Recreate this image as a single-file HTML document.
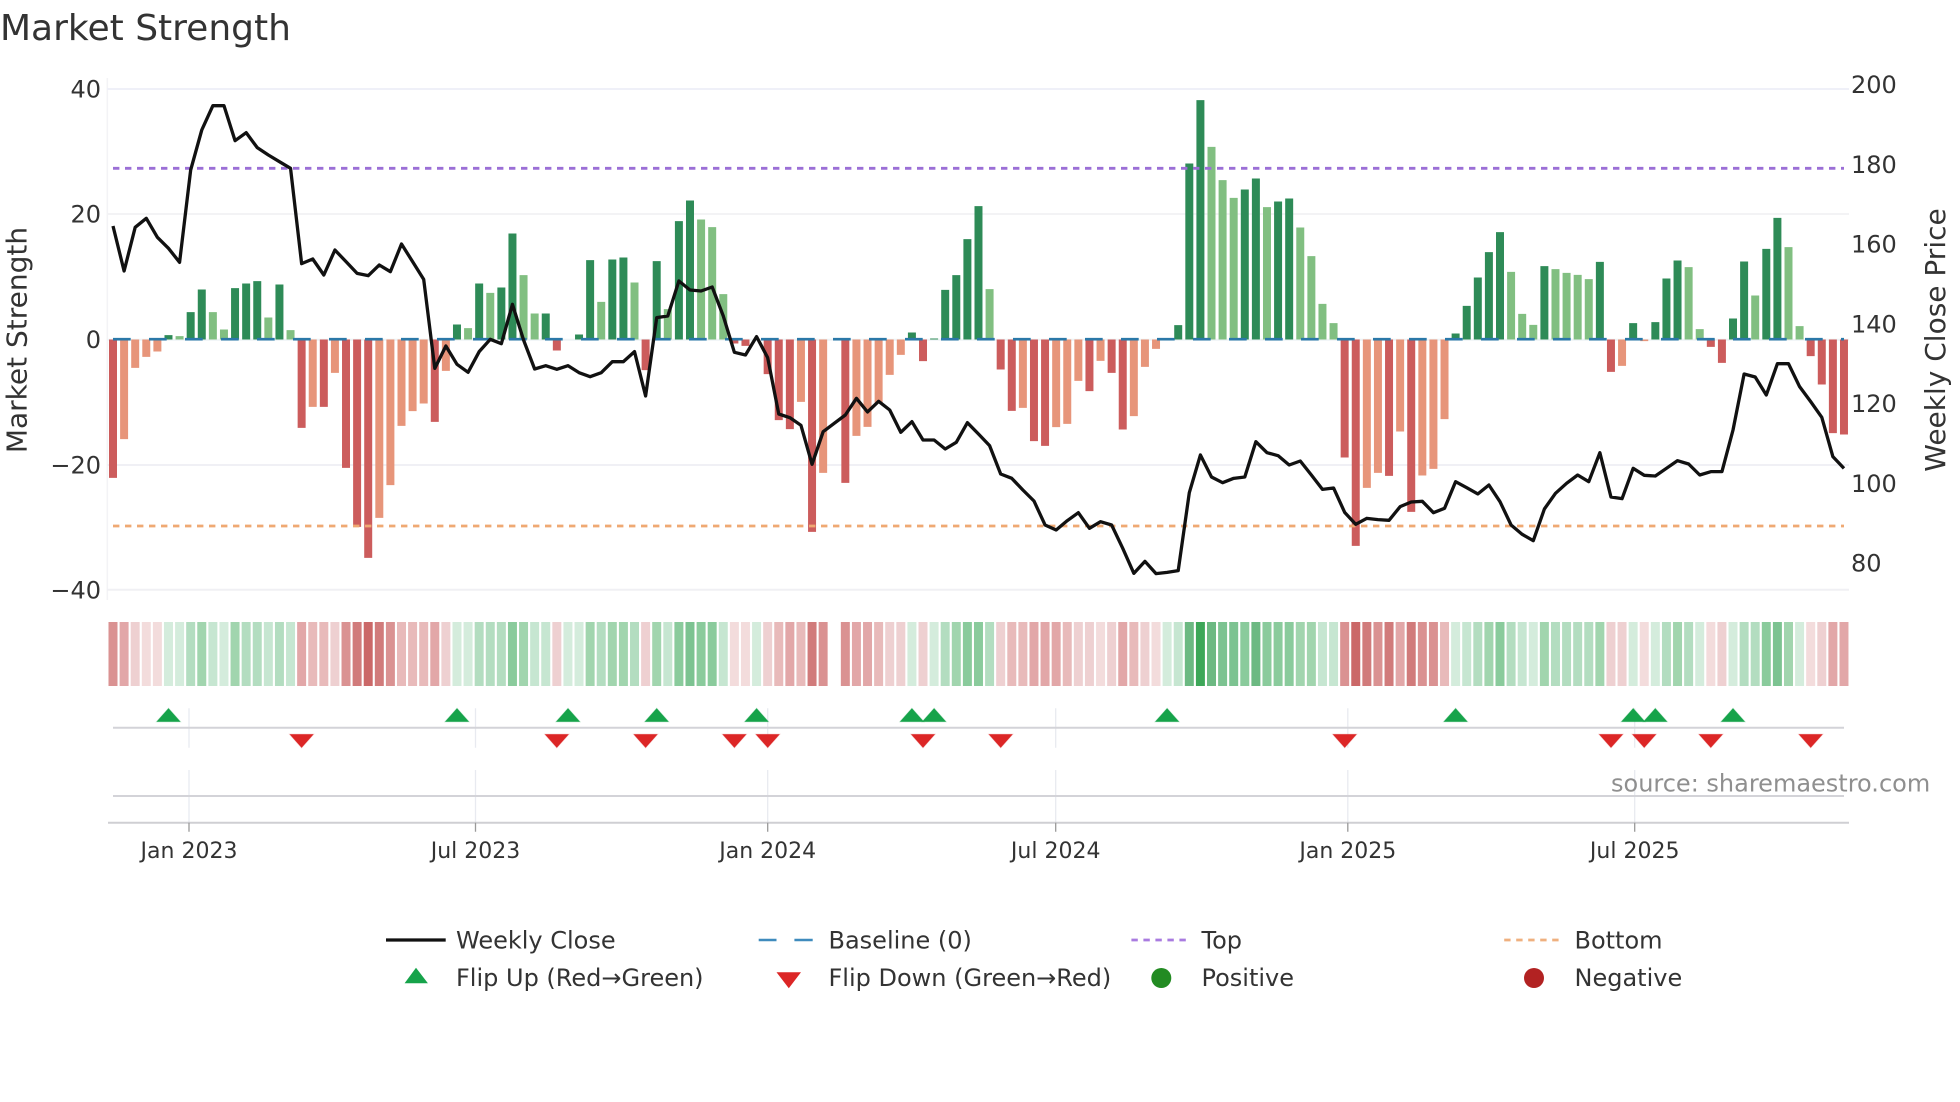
<!DOCTYPE html>
<html lang="en">
<head>
<meta charset="utf-8">
<title>Market Strength</title>
<style>
html,body{margin:0;padding:0;background:#fff;}
svg{display:block;}
text{font-family:"DejaVu Sans","Liberation Sans",sans-serif;fill:#333;}
</style>
</head>
<body>
<svg xmlns="http://www.w3.org/2000/svg" width="1960" height="1102" viewBox="0 0 1960 1102">
<rect width="1960" height="1102" fill="#fff"/>

<text x="0" y="40" font-size="36">Market Strength</text>

<!-- grid -->
<path d="M107.3 78V600" stroke="#f3f3f6" stroke-width="1.5" fill="none"/>
<path d="M107 89H1849" stroke="#eff0f8" stroke-width="2" fill="none"/>
<path d="M107 214H1849" stroke="#f3f3f5" stroke-width="2" fill="none"/>
<path d="M107 339.7H1849" stroke="#eef3f6" stroke-width="2" fill="none"/>
<path d="M107 465H1849" stroke="#f0f0f5" stroke-width="2" fill="none"/>
<path d="M107 589.7H1849" stroke="#f0f0f4" stroke-width="2" fill="none"/>

<!-- y labels -->
<g font-size="24" text-anchor="end">
<text x="101" y="97.6">40</text>
<text x="101" y="222.6">20</text>
<text x="101" y="348.1">0</text>
<text x="101" y="473.6">−20</text>
<text x="101" y="598.3">−40</text>
</g>
<g font-size="24">
<text x="1851" y="93.2">200</text>
<text x="1851" y="172.9">180</text>
<text x="1851" y="252.6">160</text>
<text x="1851" y="332.4">140</text>
<text x="1851" y="412.1">120</text>
<text x="1851" y="491.8">100</text>
<text x="1851" y="571.5">80</text>
</g>
<text transform="translate(26.5 340) rotate(-90)" font-size="28" text-anchor="middle">Market Strength</text>
<text transform="translate(1945 340) rotate(-90)" font-size="28" text-anchor="middle">Weekly Close Price</text>

<!-- bars: x = week index, y = 3x pixel offset from baseline -->
<g transform="translate(113 339.5) scale(11.096 .33333)" fill="none" stroke-width=".72">
<path stroke="#2e8b57" d="M5 0V-13M7 0V-82M8 0V-150M11 0V-154M12 0V-168M13 0V-175M15 0V-165M31 0V-45M33 0V-168M35 0V-156M36 0V-318M39 0V-78M42 0V-15M43 0V-238M45 0V-240M46 0V-246M49 0V-235M51 0V-355M52 0V-417M72 0V-21M74 0V-3M75 0V-149M76 0V-193M77 0V-301M78 0V-400M96 0V-43M97 0V-528M98 0V-718M102 0V-450M103 0V-483M105 0V-414M106 0V-423M121 0V-18M122 0V-101M123 0V-186M124 0V-262M125 0V-322M129 0V-220M134 0V-233M137 0V-49M139 0V-52M140 0V-183M141 0V-237M146 0V-63M147 0V-234M149 0V-272M150 0V-365"/>
<path stroke="#81bf81" d="M6 0V-10M9 0V-82M10 0V-30M14 0V-66M16 0V-28M32 0V-34M34 0V-140M37 0V-193M38 0V-78M44 0V-113M47 0V-171M50 0V-91M53 0V-360M54 0V-337M55 0V-136M79 0V-151M99 0V-578M100 0V-478M101 0V-425M104 0V-397M107 0V-336M108 0V-250M109 0V-107M110 0V-49M126 0V-203M127 0V-77M128 0V-44M130 0V-211M131 0V-200M132 0V-194M133 0V-181M142 0V-217M143 0V-31M148 0V-132M151 0V-277M152 0V-40"/>
<path stroke="#cc5c5c" d="M0 0V415M17 0V265M19 0V202M21 0V385M22 0V562M23 0V655M29 0V247M40 0V33M48 0V92M56 0V12M57 0V19M59 0V104M60 0V242M61 0V269M63 0V577M66 0V430M73 0V65M80 0V90M81 0V214M83 0V305M84 0V319M88 0V155M90 0V100M91 0V270M111 0V354M112 0V619M115 0V409M117 0V517M135 0V97M144 0V22M145 0V70M153 0V50M154 0V135M155 0V281M156 0V285"/>
<path stroke="#e7957a" d="M1 0V299M2 0V85M3 0V52M4 0V36M18 0V202M20 0V100M24 0V535M25 0V437M26 0V259M27 0V215M28 0V192M30 0V94M62 0V187M64 0V400M67 0V289M68 0V262M69 0V190M70 0V106M71 0V46M82 0V205M85 0V263M86 0V253M87 0V124M89 0V64M92 0V230M93 0V82M94 0V28M113 0V445M114 0V400M116 0V276M118 0V408M119 0V388M120 0V239M136 0V79M138 0V5"/>
</g>

<!-- reference lines -->
<path d="M113 339.2H1844" stroke="#2a78a8" stroke-width="2.7" stroke-dasharray="17.7 18.3" fill="none"/>
<path d="M113 168.3H1844" stroke="#9b6fd6" stroke-width="2.8" stroke-dasharray="6.4 5.6" fill="none"/>
<path d="M113 526H1844" stroke="#efa973" stroke-width="2.8" stroke-dasharray="6.4 5.6" fill="none"/>

<!-- weekly close -->
<g transform="translate(113 0) scale(11.096 .33333)">
<polyline fill="none" stroke="#111" stroke-width="3.3" stroke-linejoin="round" vector-effect="non-scaling-stroke" points="0,678 1,813 2,682 3,655 4,712 5,745 6,787 7,510 8,390 9,317 10,317 11,422 12,398 13,443 14,465 15,485 16,505 17,791 18,777 19,825 20,750 21,785 22,820 23,827 24,795 25,815 26,732 27,785 28,838 29,1105 30,1038 31,1093 32,1117 33,1055 34,1018 35,1031 36,913 37,1020 38,1107 39,1097 40,1108 41,1097 42,1118 43,1130 44,1118 45,1085 46,1085 47,1055 48,1188 49,953 50,948 51,843 52,870 53,873 54,861 55,948 56,1057 57,1065 58,1010 59,1073 60,1242 61,1253 62,1276 63,1393 64,1295 65,1270 66,1245 67,1195 68,1236 69,1204 70,1230 71,1297 72,1265 73,1320 74,1320 75,1347 76,1327 77,1268 78,1302 79,1337 80,1422 81,1435 82,1470 83,1503 84,1575 85,1590 86,1562 87,1538 88,1585 89,1565 90,1575 91,1645 92,1720 93,1684 94,1721 95,1717 96,1712 97,1478 98,1365 99,1431 100,1448 101,1435 102,1431 103,1325 104,1358 105,1367 106,1395 107,1383 108,1425 109,1468 110,1464 111,1537 112,1573 113,1555 114,1559 115,1561 116,1520 117,1506 118,1504 119,1538 120,1525 121,1445 122,1463 123,1482 124,1455 125,1505 126,1575 127,1603 128,1622 129,1527 130,1480 131,1450 132,1425 133,1445 134,1358 135,1491 136,1496 137,1405 138,1426 139,1428 140,1405 141,1382 142,1392 143,1425 144,1415 145,1415 146,1290 147,1122 148,1131 149,1185 150,1091 151,1091 152,1160 153,1205 154,1252 155,1370 156,1405"/>
</g>

<!-- heat strip -->
<g transform="translate(113 622) scale(11.096 .955)" fill="none" stroke-width=".81">
<path stroke="#f3dcdc" d="M3 0V67M4 0V67M56 0V67M57 0V67M89 0V67M94 0V67M138 0V67M144 0V67M153 0V67"/>
<path stroke="#eed0d1" d="M2 0V67M20 0V67M30 0V67M40 0V67M48 0V67M59 0V67M70 0V67M71 0V67M73 0V67M80 0V67M87 0V67M88 0V67M90 0V67M93 0V67M135 0V67M136 0V67M145 0V67M154 0V67"/>
<path stroke="#e8baba" d="M18 0V67M19 0V67M26 0V67M27 0V67M28 0V67M60 0V67M62 0V67M69 0V67M81 0V67M82 0V67M86 0V67M92 0V67M120 0V67"/>
<path stroke="#e2a7a8" d="M1 0V67M17 0V67M29 0V67M61 0V67M67 0V67M68 0V67M83 0V67M84 0V67M85 0V67M91 0V67M116 0V67M155 0V67M156 0V67"/>
<path stroke="#da9292" d="M0 0V67M21 0V67M25 0V67M64 0V67M66 0V67M111 0V67M114 0V67M118 0V67M119 0V67"/>
<path stroke="#d17b7b" d="M22 0V67M24 0V67M63 0V67M113 0V67M115 0V67M117 0V67"/>
<path stroke="#cb6868" d="M23 0V67M112 0V67"/>
<path stroke="#d4ecdc" d="M5 0V67M6 0V67M10 0V67M31 0V67M32 0V67M41 0V67M42 0V67M58 0V67M72 0V67M74 0V67M95 0V67M121 0V67M128 0V67M137 0V67M139 0V67M143 0V67M146 0V67M152 0V67"/>
<path stroke="#c6e6d1" d="M9 0V67M14 0V67M16 0V67M38 0V67M39 0V67M50 0V67M55 0V67M96 0V67M109 0V67M110 0V67M122 0V67M127 0V67"/>
<path stroke="#b3ddc0" d="M7 0V67M12 0V67M13 0V67M15 0V67M33 0V67M34 0V67M35 0V67M44 0V67M47 0V67M75 0V67M79 0V67M123 0V67M126 0V67M130 0V67M131 0V67M132 0V67M133 0V67M140 0V67M142 0V67M147 0V67M148 0V67"/>
<path stroke="#a1d5ae" d="M8 0V67M11 0V67M37 0V67M43 0V67M45 0V67M46 0V67M49 0V67M76 0V67M107 0V67M108 0V67M124 0V67M129 0V67M134 0V67M141 0V67M151 0V67"/>
<path stroke="#8acb9c" d="M36 0V67M51 0V67M53 0V67M54 0V67M77 0V67M78 0V67M102 0V67M104 0V67M105 0V67M106 0V67M125 0V67M149 0V67"/>
<path stroke="#7cc391" d="M52 0V67M100 0V67M101 0V67M150 0V67"/>
<path stroke="#6cb982" d="M97 0V67M99 0V67M103 0V67"/>
<path stroke="#3da758" d="M98 0V67"/>
</g>

<!-- event panels -->
<path d="M189 708.3V747.7M189 770V822.7M475.5 708.3V747.7M475.5 770V822.7M767.7 708.3V747.7M767.7 770V822.7M1055.7 708.3V747.7M1055.7 770V822.7M1347.8 708.3V747.7M1347.8 770V822.7M1634.7 708.3V747.7M1634.7 770V822.7" stroke="#e8eaf0" stroke-width="1.3" fill="none"/>
<path d="M113 727.7H1844M113 796H1844" stroke="#d3d3d8" stroke-width="2" fill="none"/>
<path d="M108 822.7H1849" stroke="#cfcfd3" stroke-width="2" fill="none"/>
<path d="M189 822.7V831.7M475.5 822.7V831.7M767.7 822.7V831.7M1055.7 822.7V831.7M1347.8 822.7V831.7M1634.7 822.7V831.7" stroke="#9a9a9a" stroke-width="1.3" fill="none"/>

<defs>
<polygon id="u" points="0,-13.4 -12,0 12,0" fill="#16a34a" stroke="#16a34a" stroke-opacity=".25" stroke-width="1"/>
<polygon id="d" points="-12,0 12,0 0,13.4" fill="#dc2626" stroke="#dc2626" stroke-opacity=".25" stroke-width="1"/>
</defs>
<use href="#u" x="168.5" y="721.7"/>
<use href="#u" x="457" y="721.7"/>
<use href="#u" x="568" y="721.7"/>
<use href="#u" x="656.7" y="721.7"/>
<use href="#u" x="756.6" y="721.7"/>
<use href="#u" x="911.9" y="721.7"/>
<use href="#u" x="934.1" y="721.7"/>
<use href="#u" x="1167.1" y="721.7"/>
<use href="#u" x="1455.6" y="721.7"/>
<use href="#u" x="1633.2" y="721.7"/>
<use href="#u" x="1655.3" y="721.7"/>
<use href="#u" x="1733" y="721.7"/>
<use href="#d" x="301.6" y="734.3"/>
<use href="#d" x="556.8" y="734.3"/>
<use href="#d" x="645.6" y="734.3"/>
<use href="#d" x="734.4" y="734.3"/>
<use href="#d" x="767.7" y="734.3"/>
<use href="#d" x="923" y="734.3"/>
<use href="#d" x="1000.7" y="734.3"/>
<use href="#d" x="1344.7" y="734.3"/>
<use href="#d" x="1611" y="734.3"/>
<use href="#d" x="1644.2" y="734.3"/>
<use href="#d" x="1710.8" y="734.3"/>
<use href="#d" x="1810.7" y="734.3"/>

<!-- x labels -->
<g font-size="22" text-anchor="middle">
<text x="189" y="858">Jan 2023</text>
<text x="475.5" y="858">Jul 2023</text>
<text x="767.7" y="858">Jan 2024</text>
<text x="1055.7" y="858">Jul 2024</text>
<text x="1347.8" y="858">Jan 2025</text>
<text x="1634.7" y="858">Jul 2025</text>
</g>

<text x="1611" y="791.5" font-size="24" style="fill:#8f8f8f">source: sharemaestro.com</text>

<!-- legend -->
<path d="M386 940H445.7" stroke="#111" stroke-width="3.2" fill="none"/>
<path d="M758.7 940H776.5M794.4 940H812.7" stroke="#3f8bbd" stroke-width="2.6" fill="none"/>
<path d="M1131.4 940H1186.3" stroke="#a97be0" stroke-width="2.8" stroke-dasharray="6.4 5.6" fill="none"/>
<path d="M1504.2 940H1558.7" stroke="#efb07f" stroke-width="2.8" stroke-dasharray="6.4 5.6" fill="none"/>
<polygon points="416,967.7 404.6,983.3 427.9,983.3" fill="#16a34a"/>
<polygon points="776.5,972.3 801,972.3 788.8,988.3" fill="#dc2626"/>
<circle cx="1161.3" cy="978" r="10" fill="#228b22"/>
<circle cx="1534" cy="978" r="10" fill="#b22222"/>
<g font-size="24">
<text x="456" y="948.3">Weekly Close</text>
<text x="828.5" y="948.3">Baseline (0)</text>
<text x="1201.5" y="948.3">Top</text>
<text x="1574.5" y="948.3">Bottom</text>
<text x="456" y="986">Flip Up (Red→Green)</text>
<text x="828.5" y="986">Flip Down (Green→Red)</text>
<text x="1201.5" y="986">Positive</text>
<text x="1574.5" y="986">Negative</text>
</g>
</svg>
</body>
</html>
